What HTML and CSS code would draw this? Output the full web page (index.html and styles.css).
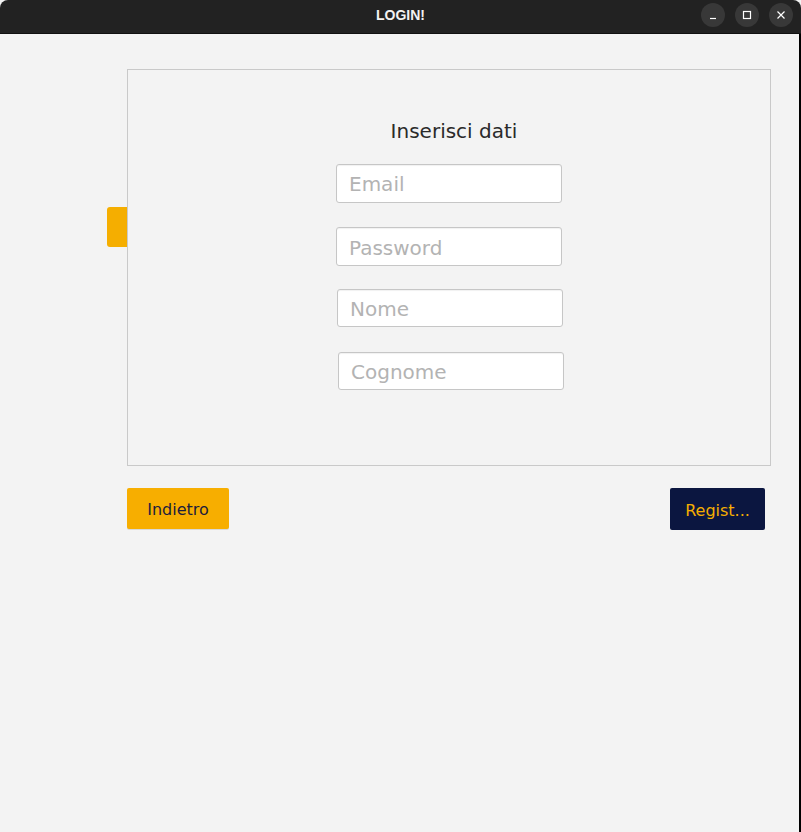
FILE: index.html
```html
<!DOCTYPE html>
<html lang="it">
<head>
<meta charset="utf-8">
<title>LOGIN!</title>
<link rel="stylesheet" href="styles.css">
</head>
<body>
<div class="window">
  <header class="titlebar">
    <span class="title">LOGIN!</span>
    <div class="controls">
      <span class="ctl"><svg width="10" height="10" viewBox="0 0 10 10"><path d="M2 8.5h6" stroke="#fff" stroke-width="1.2"/></svg></span>
      <span class="ctl"><svg width="10" height="10" viewBox="0 0 10 10"><rect x="1.5" y="1.5" width="7" height="7" fill="none" stroke="#fff" stroke-width="1.2"/></svg></span>
      <span class="ctl"><svg width="10" height="10" viewBox="0 0 10 10"><path d="M1.5 1.5l7 7M8.5 1.5l-7 7" stroke="#fff" stroke-width="1.2"/></svg></span>
    </div>
  </header>
  <main class="content">
    <div class="stage">
      <div class="tab"></div>
      <section class="panel">
        <h1 class="heading">Inserisci dati</h1>
        <div class="form">
          <input class="field f-email" type="text" placeholder="Email">
          <input class="field f-pass" type="password" placeholder="Password">
          <input class="field f-nome" type="text" placeholder="Nome">
          <input class="field f-cognome" type="text" placeholder="Cognome">
        </div>
      </section>
    </div>
    <div class="actions">
      <button class="btn btn-back">Indietro</button>
      <button class="btn btn-reg">Regist...</button>
    </div>
  </main>
</div>
</body>
</html>
```
FILE: styles.css
```css
* { box-sizing: border-box; }
html, body { margin: 0; padding: 0; }
body {
  width: 801px;
  height: 832px;
  background: #f3f3f3;
  font-family: "DejaVu Sans", sans-serif;
  overflow: hidden;
}
.window {
  width: 801px;
  height: 832px;
  display: flex;
  flex-direction: column;
  background: #f3f3f3;
}
.titlebar {
  height: 34px;
  flex: none;
  background: #222222;
  border-radius: 8px 8px 0 0;
  border-bottom: 1px solid #111;
  display: grid;
  grid-template-columns: 1fr auto 1fr;
  align-items: center;
}
.title {
  grid-column: 2;
  color: #f2f2f2;
  font-family: "Liberation Sans", sans-serif;
  font-weight: bold;
  font-size: 14px;
  margin-top: -3px;
}
.controls {
  grid-column: 3;
  justify-self: end;
  display: flex;
  gap: 10px;
  padding-right: 8px;
  margin-top: -3px;
}
.ctl {
  width: 24px;
  height: 24px;
  border-radius: 50%;
  background: #383838;
  display: flex;
  align-items: center;
  justify-content: center;
}
.content {
  flex: 1;
  border-right: 2px solid #000;
  padding-top: 35px;
  background: #f3f3f3;
}
.stage {
  display: flex;
  padding-left: 107px;
}
.tab {
  width: 20px;
  height: 40px;
  margin-top: 138px;
  background: #f5ae00;
  border-radius: 3px 0 0 3px;
}
.panel {
  width: 644px;
  height: 397px;
  border: 1px solid #c9c9c9;
  display: flex;
  flex-direction: column;
  align-items: center;
}
.heading {
  margin: 49px 0 0 10px;
  font-size: 20px;
  font-weight: normal;
  line-height: 24px;
  color: #2a2a2a;
}
.form {
  margin-top: 21px;
  display: flex;
  flex-direction: column;
  align-items: center;
}
.field {
  width: 226px;
  height: 39px;
  border: 1px solid #c6c6c6;
  border-radius: 3px;
  background: #fff;
  box-shadow: inset 0 1px 1px rgba(0,0,0,0.06);
  padding: 0 12px;
  font-family: "DejaVu Sans", sans-serif;
  font-size: 20px;
  color: #333;
  outline: none;
}
.field::placeholder { color: #b3b3b3; }
.f-pass { margin-top: 24px; padding-top: 2px; }
.f-nome { margin-top: 23px; height: 38px; margin-left: 2px; padding-top: 2px; }
.f-cognome { margin-top: 25px; height: 38px; margin-left: 4px; padding-top: 2px; }
.actions {
  margin: 22px 0 0 127px;
  width: 638px;
  display: flex;
  justify-content: space-between;
  align-items: flex-start;
}
.btn {
  border: none;
  border-radius: 2px;
  font-family: "DejaVu Sans", sans-serif;
  font-size: 16px;
  padding: 0;
}
.btn-back {
  width: 102px;
  height: 41px;
  padding-top: 2px;
  background: #f7ae00;
  color: #1c1c3c;
  box-shadow: 0 1px 0 #d9d9d9;
}
.btn-reg {
  width: 95px;
  height: 42px;
  padding-top: 2px;
  background: #0b1640;
  color: #f5ae00;
}
```
